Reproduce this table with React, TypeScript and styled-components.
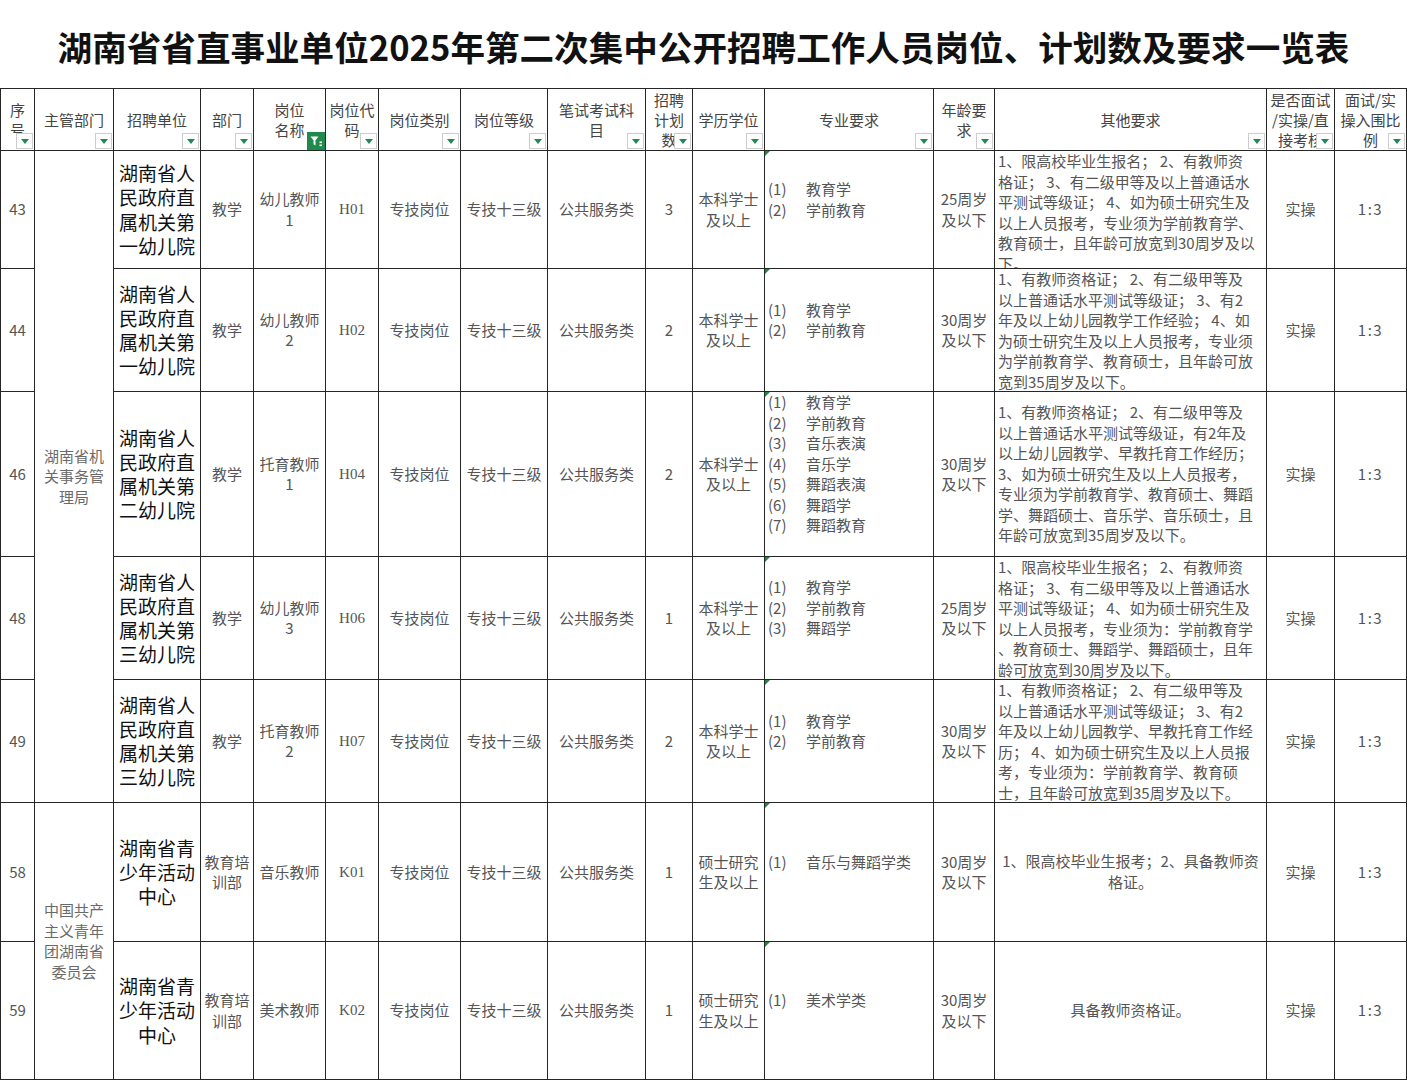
import styled, { createGlobalStyle, css } from "styled-components";

const GlobalStyle = createGlobalStyle`
  html, body {
    margin: 0;
    padding: 0;
    background: #fff;
  }
  body {
    font-family: "Noto Sans CJK SC", "Noto Sans", sans-serif;
  }
`;

const COLUMN_WIDTHS = [34, 79, 87, 53, 72, 53, 82, 87, 98, 47, 72, 169, 61, 272, 68, 72];
const ROW_HEIGHTS = [62, 118, 123, 165, 123, 123, 139, 138];
const LINE = "#262626";

const Page = styled.div`
  width: 1407px;
  height: 1080px;
  overflow: hidden;
`;

const Title = styled.h1`
  margin: 0;
  height: 88px;
  padding-top: 3px;
  box-sizing: border-box;
  display: flex;
  align-items: center;
  justify-content: center;
  font-size: 34.6px;
  font-weight: 700;
  color: #111;
`;

const Sheet = styled.div`
  display: grid;
  grid-template-columns: ${COLUMN_WIDTHS.map((w) => `${w}px`).join(" ")};
  grid-template-rows: ${ROW_HEIGHTS.map((h) => `${h}px`).join(" ")};
  width: 1407px;
  box-sizing: border-box;
  border-left: 1px solid ${LINE};
  border-top: 1px solid ${LINE};
`;

const Cell = styled.div<{ $span?: number; $tone?: "normal" | "muted" }>`
  box-sizing: border-box;
  border-right: 1px solid ${LINE};
  border-bottom: 1px solid ${LINE};
  display: flex;
  flex-direction: column;
  justify-content: center;
  align-items: center;
  text-align: center;
  padding: 0 2px;
  overflow: hidden;
  white-space: pre-line;
  font-size: 15px;
  line-height: 20.5px;
  color: ${(p) => (p.$tone === "muted" ? "#6a6a6a" : "#555")};
  ${(p) =>
    p.$span &&
    css`
      grid-row: span ${p.$span};
    `}
`;

const HeadCell = styled(Cell)`
  position: relative;
  color: #444;
  line-height: 20px;
`;

const UnitCell = styled(Cell)`
  color: #111;
  font-size: 19px;
  line-height: 24.2px;
`;

const CodeCell = styled(Cell)`
  font-family: "Liberation Serif", "Noto Sans CJK SC", serif;
`;

const RatioCell = styled(Cell)`
  letter-spacing: 1.5px;
`;

const MajorCell = styled(Cell)`
  position: relative;
  align-items: stretch;
  padding: 0 3px 20px;

  &::before {
    content: "";
    position: absolute;
    left: 0;
    top: 0;
    border-top: 5px solid #1e8a3c;
    border-right: 5px solid transparent;
  }
`;

const MajorItem = styled.div`
  display: flex;
  white-space: nowrap;
  text-align: left;
`;

const MajorNum = styled.span`
  flex: none;
  width: 38px;
`;

const NoteCell = styled(Cell)<{ $center?: boolean }>`
  align-items: stretch;
  justify-content: safe center;
  padding: 0 3px;
  white-space: pre;
  line-height: 20.6px;
  text-align: ${(p) => (p.$center ? "center" : "left")};
`;

const FilterButton = styled.span<{ $active?: boolean }>`
  position: absolute;
  right: 1px;
  bottom: 1px;
  width: 17px;
  height: 16px;
  box-sizing: border-box;
  border: 1px solid #cdcdcd;
  background: #fff;
  display: flex;
  align-items: center;
  justify-content: center;

  ${(p) =>
    p.$active
      ? css`
          right: 0;
          bottom: 0;
          width: 18px;
          height: 18px;
          border-color: #1e8a4c;
          background: #1e8a4c;
        `
      : css`
          &::after {
            content: "";
            border-left: 4px solid transparent;
            border-right: 4px solid transparent;
            border-top: 5px solid #1f8a57;
          }
        `}
`;

const FilterIcon = () => (
  <svg width="16" height="16" viewBox="0 0 16 16">
    <path d="M2.5 3.5h8l-3 3.8v5.2l-2-1.2V7.3z" fill="#fff" />
    <rect x="11.5" y="8.5" width="2.5" height="1.6" fill="#fff" />
    <rect x="11.5" y="11.5" width="2.5" height="1.6" fill="#fff" />
  </svg>
);

const HEADERS = [
  "序\n号",
  "主管部门",
  "招聘单位",
  "部门",
  "岗位\n名称",
  "岗位代\n码",
  "岗位类别",
  "岗位等级",
  "笔试考试科\n目",
  "招聘\n计划\n数",
  "学历学位",
  "专业要求",
  "年龄要\n求",
  "其他要求",
  "是否面试\n/实操/直\n接考核",
  "面试/实\n操入围比\n例",
];

type Post = {
  no: string;
  unit: string;
  dept: string;
  post: string;
  code: string;
  count: string;
  edu: string;
  majors: string[];
  age: string;
  note: string;
  noteCenter?: boolean;
};

type Group = {
  authority: string;
  posts: Post[];
};

const GROUPS: Group[] = [
  {
    authority: "湖南省机\n关事务管\n理局",
    posts: [
      {
        no: "43",
        unit: "湖南省人\n民政府直\n属机关第\n一幼儿院",
        dept: "教学",
        post: "幼儿教师\n1",
        code: "H01",
        count: "3",
        edu: "本科学士\n及以上",
        majors: ["教育学", "学前教育"],
        age: "25周岁\n及以下",
        note:
          "1、限高校毕业生报名； 2、有教师资\n格证； 3、有二级甲等及以上普通话水\n平测试等级证； 4、如为硕士研究生及\n以上人员报考，专业须为学前教育学、\n教育硕士，且年龄可放宽到30周岁及以\n下。",
      },
      {
        no: "44",
        unit: "湖南省人\n民政府直\n属机关第\n一幼儿院",
        dept: "教学",
        post: "幼儿教师\n2",
        code: "H02",
        count: "2",
        edu: "本科学士\n及以上",
        majors: ["教育学", "学前教育"],
        age: "30周岁\n及以下",
        note:
          "1、有教师资格证； 2、有二级甲等及\n以上普通话水平测试等级证； 3、有2\n年及以上幼儿园教学工作经验； 4、如\n为硕士研究生及以上人员报考，专业须\n为学前教育学、教育硕士，且年龄可放\n宽到35周岁及以下。",
      },
      {
        no: "46",
        unit: "湖南省人\n民政府直\n属机关第\n二幼儿院",
        dept: "教学",
        post: "托育教师\n1",
        code: "H04",
        count: "2",
        edu: "本科学士\n及以上",
        majors: ["教育学", "学前教育", "音乐表演", "音乐学", "舞蹈表演", "舞蹈学", "舞蹈教育"],
        age: "30周岁\n及以下",
        note:
          "1、有教师资格证； 2、有二级甲等及\n以上普通话水平测试等级证，有2年及\n以上幼儿园教学、早教托育工作经历；\n3、如为硕士研究生及以上人员报考，\n专业须为学前教育学、教育硕士、舞蹈\n学、舞蹈硕士、音乐学、音乐硕士，且\n年龄可放宽到35周岁及以下。",
      },
      {
        no: "48",
        unit: "湖南省人\n民政府直\n属机关第\n三幼儿院",
        dept: "教学",
        post: "幼儿教师\n3",
        code: "H06",
        count: "1",
        edu: "本科学士\n及以上",
        majors: ["教育学", "学前教育", "舞蹈学"],
        age: "25周岁\n及以下",
        note:
          "1、限高校毕业生报名； 2、有教师资\n格证； 3、有二级甲等及以上普通话水\n平测试等级证； 4、如为硕士研究生及\n以上人员报考，专业须为：学前教育学\n、教育硕士、舞蹈学、舞蹈硕士，且年\n龄可放宽到30周岁及以下。",
      },
      {
        no: "49",
        unit: "湖南省人\n民政府直\n属机关第\n三幼儿院",
        dept: "教学",
        post: "托育教师\n2",
        code: "H07",
        count: "2",
        edu: "本科学士\n及以上",
        majors: ["教育学", "学前教育"],
        age: "30周岁\n及以下",
        note:
          "1、有教师资格证； 2、有二级甲等及\n以上普通话水平测试等级证； 3、有2\n年及以上幼儿园教学、早教托育工作经\n历； 4、如为硕士研究生及以上人员报\n考，专业须为：学前教育学、教育硕\n士，且年龄可放宽到35周岁及以下。",
      },
    ],
  },
  {
    authority: "中国共产\n主义青年\n团湖南省\n委员会",
    posts: [
      {
        no: "58",
        unit: "湖南省青\n少年活动\n中心",
        dept: "教育培\n训部",
        post: "音乐教师",
        code: "K01",
        count: "1",
        edu: "硕士研究\n生及以上",
        majors: ["音乐与舞蹈学类"],
        age: "30周岁\n及以下",
        note: "1、限高校毕业生报考；2、具备教师资\n格证。",
        noteCenter: true,
      },
      {
        no: "59",
        unit: "湖南省青\n少年活动\n中心",
        dept: "教育培\n训部",
        post: "美术教师",
        code: "K02",
        count: "1",
        edu: "硕士研究\n生及以上",
        majors: ["美术学类"],
        age: "30周岁\n及以下",
        note: "具备教师资格证。",
        noteCenter: true,
      },
    ],
  },
];

export default function App() {
  return (
    <Page>
      <GlobalStyle />
      <Title>湖南省省直事业单位2025年第二次集中公开招聘工作人员岗位、计划数及要求一览表</Title>
      <Sheet>
        {HEADERS.map((label, i) => (
          <HeadCell key={label}>
            {label}
            <FilterButton $active={i === 4}>{i === 4 && <FilterIcon />}</FilterButton>
          </HeadCell>
        ))}

        {GROUPS.map((group) =>
          group.posts.map((p, idx) => [
            <Cell key={`${p.no}-no`}>{p.no}</Cell>,
            idx === 0 ? (
              <Cell key={`${p.no}-auth`} $span={group.posts.length} $tone="muted">
                {group.authority}
              </Cell>
            ) : null,
            <UnitCell key={`${p.no}-unit`}>{p.unit}</UnitCell>,
            <Cell key={`${p.no}-dept`}>{p.dept}</Cell>,
            <Cell key={`${p.no}-post`}>{p.post}</Cell>,
            <CodeCell key={`${p.no}-code`}>{p.code}</CodeCell>,
            <Cell key={`${p.no}-type`}>专技岗位</Cell>,
            <Cell key={`${p.no}-level`}>专技十三级</Cell>,
            <Cell key={`${p.no}-exam`}>公共服务类</Cell>,
            <Cell key={`${p.no}-count`}>{p.count}</Cell>,
            <Cell key={`${p.no}-edu`}>{p.edu}</Cell>,
            <MajorCell key={`${p.no}-majors`}>
              {p.majors.map((m, mi) => (
                <MajorItem key={m}>
                  <MajorNum>({mi + 1})</MajorNum>
                  <span>{m}</span>
                </MajorItem>
              ))}
            </MajorCell>,
            <Cell key={`${p.no}-age`}>{p.age}</Cell>,
            <NoteCell key={`${p.no}-note`} $center={p.noteCenter}>
              {p.note}
            </NoteCell>,
            <Cell key={`${p.no}-mode`}>实操</Cell>,
            <RatioCell key={`${p.no}-ratio`}>1:3</RatioCell>,
          ])
        )}
      </Sheet>
    </Page>
  );
}
